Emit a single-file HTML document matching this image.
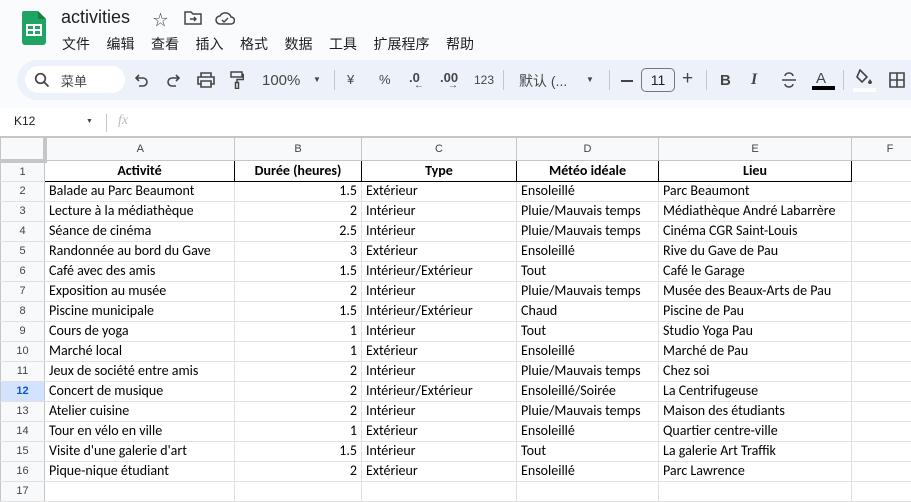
<!DOCTYPE html>
<html><head><meta charset="utf-8"><style>
*{margin:0;padding:0;box-sizing:border-box}
body{width:911px;height:500px;overflow:hidden;background:#f9fbfd;font-family:"Liberation Sans","Noto Sans CJK SC",sans-serif;position:relative;color:#1f1f1f}
.a{position:absolute}
.menu span{margin-right:16.5px}
.tb{position:absolute;left:17px;top:60px;width:920px;height:40px;background:#edf2fa;border-radius:20px}
.ic{position:absolute;font-size:14px;color:#444746}
.sep{position:absolute;top:70px;width:1px;height:20px;background:#c7c7c7}
table{position:absolute;left:0;top:137px;border-collapse:collapse;table-layout:fixed;width:928px;background:#fff;font-family:Carlito,"Liberation Sans",sans-serif;font-size:14px}
td{height:20px;border:1px solid #e1e1e1;padding:0 4px;white-space:nowrap;overflow:hidden;color:#000;line-height:18px}
td.rn{background:#f8f9fa;color:#444;text-align:center;font-size:11px;font-family:"Liberation Sans",sans-serif;border-color:#c4c7c5 #c4c7c5 #e1e1e1 #c4c7c5}
tr.hd td{background:#f8f9fa;color:#444;text-align:center;font-size:11px;font-family:"Liberation Sans",sans-serif;height:23px;border-color:#c4c7c5}
tr.h1 td.c{font-weight:bold;text-align:center;border:1px solid #000}
td.n{text-align:right}
tr.sel td.rn{background:#d3e3fd;color:#0b57d0;font-weight:bold}
</style></head><body>
<svg class="a" style="left:22px;top:11px" width="24" height="34" viewBox="0 0 24 34"><path d="M2 0h14l8 8v23a3 3 0 0 1-3 3H3a3 3 0 0 1-3-3V2a2 2 0 0 1 2-2z" fill="#1fa463"/><path d="M16 0v6a2 2 0 0 0 2 2h6z" fill="#188038"/><rect x="5" y="14" width="14" height="10" fill="none" stroke="#fff" stroke-width="2"/><path d="M5 19h14M12 14v10" stroke="#fff" stroke-width="2"/></svg>
<div class="a" style="left:61px;top:7px;font-size:18px;color:#1f1f1f">activities</div>
<div class="a" style="left:153px;top:9px;font-size:15px;color:#444">☆</div>
<svg class="a" style="left:184px;top:11px" width="18" height="14" viewBox="0 0 18 14"><path d="M1 1h6l2 2h8v10H1z" fill="none" stroke="#444" stroke-width="1.5"/><path d="M6 8h6M10 6l2 2-2 2" stroke="#444" stroke-width="1.4" fill="none"/></svg>
<svg class="a" style="left:215px;top:11px" width="20" height="14" viewBox="0 0 20 14"><path d="M5 13a4 4 0 0 1 0-8 6 6 0 0 1 11 1 3.5 3.5 0 0 1 0 7z" fill="none" stroke="#444" stroke-width="1.5"/><path d="M7 9l2 2 4-4" stroke="#444" stroke-width="1.4" fill="none"/></svg>
<div class="a menu" style="left:62px;top:34px;font-size:14px;color:#1f1f1f"><span>文件</span><span>编辑</span><span>查看</span><span>插入</span><span>格式</span><span>数据</span><span>工具</span><span>扩展程序</span><span>帮助</span></div>
<div class="tb"></div>
<div class="a" style="left:25px;top:66px;width:100px;height:27px;background:#fff;border-radius:14px"></div>
<svg class="a" style="left:34px;top:72px" width="16" height="16" viewBox="0 0 16 16"><circle cx="6.5" cy="6.5" r="4.8" fill="none" stroke="#444" stroke-width="1.7"/><path d="M10 10l4.5 4.5" stroke="#444" stroke-width="1.8"/></svg>
<div class="ic" style="left:61px;top:71px;font-size:13px">菜单</div>
<svg class="a" style="left:135px;top:73px" width="14" height="14" viewBox="0 0 14 14"><path d="M4 2L1 5l3 3M1 5h7a4 4 0 0 1 0 8H4" fill="none" stroke="#444" stroke-width="1.6"/></svg>
<svg class="a" style="left:166px;top:73px" width="14" height="14" viewBox="0 0 14 14"><path d="M10 2l3 3-3 3M13 5H6a4 4 0 0 0 0 8h4" fill="none" stroke="#444" stroke-width="1.6"/></svg>
<svg class="a" style="left:197px;top:72px" width="18" height="16" viewBox="0 0 18 16"><path d="M4 5V1h10v4M4 12H1V5h16v7h-3M4 9h10v6H4z" fill="none" stroke="#444" stroke-width="1.6"/></svg>
<svg class="a" style="left:230px;top:71px" width="14" height="18" viewBox="0 0 14 18"><path d="M1 1h11v5H1zM12 3.5h1.5v5H7v3M5.5 11.5h3v6h-3z" fill="none" stroke="#444" stroke-width="1.5"/></svg>
<div class="ic" style="left:262px;top:72px;font-size:15px">100%</div>
<div class="ic" style="left:313px;top:75px;font-size:8px">▼</div>
<div class="sep" style="left:334px"></div>
<div class="ic" style="left:347px;top:72px;font-size:13px">¥</div>
<div class="ic" style="left:379px;top:72px;font-size:13px">%</div>
<div class="ic" style="left:409px;top:70px;font-size:13px;font-weight:bold">.0</div>
<div class="ic" style="left:414px;top:80px;font-size:10px">←</div>
<div class="ic" style="left:440px;top:70px;font-size:13px;font-weight:bold">.00</div>
<div class="ic" style="left:448px;top:80px;font-size:10px">→</div>
<div class="ic" style="left:474px;top:73px;font-size:12px">123</div>
<div class="sep" style="left:503px"></div>
<div class="ic" style="left:519px;top:71px;font-size:14px">默认 (...</div>
<div class="ic" style="left:586px;top:75px;font-size:8px">▼</div>
<div class="sep" style="left:609px"></div>
<div class="a" style="left:621px;top:80px;width:12px;height:2px;background:#444"></div>
<div class="a" style="left:641px;top:68px;width:34px;height:24px;border:1px solid #747775;border-radius:5px;background:#edf2fa;font-size:14px;text-align:center;line-height:22px;color:#1f1f1f">11</div>
<div class="ic" style="left:682px;top:68px;font-size:19px">+</div>
<div class="sep" style="left:706px"></div>
<div class="ic" style="left:720px;top:72px;font-size:15px;font-weight:bold">B</div>
<div class="ic" style="left:751px;top:71px;font-size:16px;font-style:italic;font-family:'Liberation Serif',serif;font-weight:bold">I</div>
<svg class="a" style="left:781px;top:72px" width="16" height="16" viewBox="0 0 16 16"><path d="M1 8h14" stroke="#444" stroke-width="1.5"/><path d="M4 4a4 3 0 0 1 8 0M4 12a4 3 0 0 0 8 0" fill="none" stroke="#444" stroke-width="1.5"/></svg>
<div class="ic" style="left:816px;top:70px;font-size:15px">A</div>
<div class="a" style="left:812px;top:86px;width:23px;height:4px;background:#000"></div>
<div class="sep" style="left:843px"></div>
<svg class="a" style="left:856px;top:69px" width="18" height="16" viewBox="0 0 18 16"><path d="M4 1l7 7-5 5-5-5z" fill="none" stroke="#444" stroke-width="1.6"/><path d="M14 10l2 3a2 2 0 0 1-4 0z" fill="#444"/></svg>
<div class="a" style="left:853px;top:88px;width:23px;height:4px;background:#fff"></div>
<svg class="a" style="left:889px;top:72px" width="16" height="16" viewBox="0 0 16 16"><path d="M1 1h14v14H1zM8 1v14M1 8h14" fill="none" stroke="#444" stroke-width="1.6"/></svg>
<div class="a" style="left:0;top:108px;width:911px;height:29px;background:#fff;border-bottom:1px solid #c4c7c5"></div>
<div class="a" style="left:14px;top:114px;font-size:12px;color:#1f1f1f">K12</div>
<div class="ic" style="left:86px;top:118px;font-size:7px">▼</div>
<div class="a" style="left:106px;top:114px;width:1px;height:18px;background:#c7c7c7"></div>
<div class="a" style="left:118px;top:113px;font-size:14px;color:#bbb;font-style:italic;font-family:'Liberation Serif',serif">fx</div>
<table>
<colgroup><col style="width:44px"><col style="width:190px"><col style="width:127px"><col style="width:155px"><col style="width:142px"><col style="width:193px"><col style="width:77px"></colgroup>
<tr class="hd"><td style="border-right:4px solid #c4c7c5;border-bottom:4px solid #c4c7c5;background:#f8f9fa"></td><td>A</td><td>B</td><td>C</td><td>D</td><td>E</td><td>F</td></tr>
<tr class="h1"><td class="rn">1</td><td class="c">Activité</td><td class="c">Durée (heures)</td><td class="c">Type</td><td class="c">Météo idéale</td><td class="c">Lieu</td><td></td></tr>
<tr><td class="rn">2</td><td>Balade au Parc Beaumont</td><td class="n">1.5</td><td>Extérieur</td><td>Ensoleillé</td><td>Parc Beaumont</td><td></td></tr>
<tr><td class="rn">3</td><td>Lecture à la médiathèque</td><td class="n">2</td><td>Intérieur</td><td>Pluie/Mauvais temps</td><td>Médiathèque André Labarrère</td><td></td></tr>
<tr><td class="rn">4</td><td>Séance de cinéma</td><td class="n">2.5</td><td>Intérieur</td><td>Pluie/Mauvais temps</td><td>Cinéma CGR Saint-Louis</td><td></td></tr>
<tr><td class="rn">5</td><td>Randonnée au bord du Gave</td><td class="n">3</td><td>Extérieur</td><td>Ensoleillé</td><td>Rive du Gave de Pau</td><td></td></tr>
<tr><td class="rn">6</td><td>Café avec des amis</td><td class="n">1.5</td><td>Intérieur/Extérieur</td><td>Tout</td><td>Café le Garage</td><td></td></tr>
<tr><td class="rn">7</td><td>Exposition au musée</td><td class="n">2</td><td>Intérieur</td><td>Pluie/Mauvais temps</td><td>Musée des Beaux-Arts de Pau</td><td></td></tr>
<tr><td class="rn">8</td><td>Piscine municipale</td><td class="n">1.5</td><td>Intérieur/Extérieur</td><td>Chaud</td><td>Piscine de Pau</td><td></td></tr>
<tr><td class="rn">9</td><td>Cours de yoga</td><td class="n">1</td><td>Intérieur</td><td>Tout</td><td>Studio Yoga Pau</td><td></td></tr>
<tr><td class="rn">10</td><td>Marché local</td><td class="n">1</td><td>Extérieur</td><td>Ensoleillé</td><td>Marché de Pau</td><td></td></tr>
<tr><td class="rn">11</td><td>Jeux de société entre amis</td><td class="n">2</td><td>Intérieur</td><td>Pluie/Mauvais temps</td><td>Chez soi</td><td></td></tr>
<tr class="sel"><td class="rn">12</td><td>Concert de musique</td><td class="n">2</td><td>Intérieur/Extérieur</td><td>Ensoleillé/Soirée</td><td>La Centrifugeuse</td><td></td></tr>
<tr><td class="rn">13</td><td>Atelier cuisine</td><td class="n">2</td><td>Intérieur</td><td>Pluie/Mauvais temps</td><td>Maison des étudiants</td><td></td></tr>
<tr><td class="rn">14</td><td>Tour en vélo en ville</td><td class="n">1</td><td>Extérieur</td><td>Ensoleillé</td><td>Quartier centre-ville</td><td></td></tr>
<tr><td class="rn">15</td><td>Visite d'une galerie d'art</td><td class="n">1.5</td><td>Intérieur</td><td>Tout</td><td>La galerie Art Traffik</td><td></td></tr>
<tr><td class="rn">16</td><td>Pique-nique étudiant</td><td class="n">2</td><td>Extérieur</td><td>Ensoleillé</td><td>Parc Lawrence</td><td></td></tr>
<tr><td class="rn">17</td><td></td><td></td><td></td><td></td><td></td><td></td></tr>
</table>
</body></html>
